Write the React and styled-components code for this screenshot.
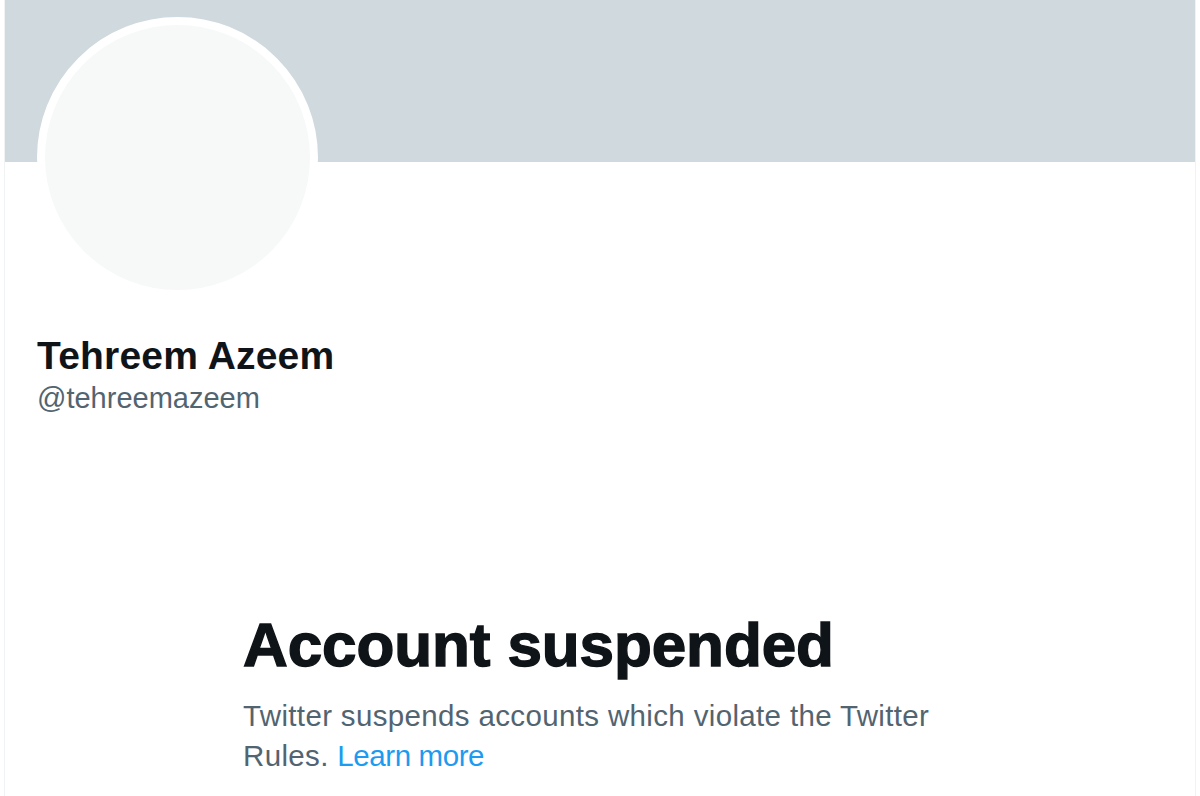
import styled, { createGlobalStyle } from "styled-components";

const GlobalStyle = createGlobalStyle`
    html, body {
        margin: 0;
        padding: 0;
        background-color: #ffffff;
        font-family: "Liberation Sans", Arial, sans-serif;
    }
`;

const Page = styled.div`
    padding-left: 4px;
    height: 796px;
    overflow: hidden;
`;

const Column = styled.main`
    box-sizing: border-box;
    width: 1192px;
    min-height: 796px;
    border-left: 1px solid #eff3f4;
    border-right: 1px solid #eff3f4;
    display: flex;
    flex-direction: column;
`;

const Banner = styled.div`
    height: 162px;
    background-color: #cfd9de;
`;

const ProfileHeader = styled.section`
    padding: 0 32px;
    display: flex;
    flex-direction: column;
    align-items: flex-start;
`;

const Avatar = styled.div`
    box-sizing: border-box;
    width: 281px;
    height: 281px;
    margin-top: -145px;
    border-radius: 50%;
    border: 8px solid #ffffff;
    background-color: #f7f9f9;
`;

const Name = styled.h1`
    margin: 34px 0 0 0;
    font-size: 39px;
    line-height: 48px;
    font-weight: 700;
    color: #0f1419;
    letter-spacing: 0.2px;
`;

const Handle = styled.div`
    font-size: 29px;
    line-height: 36px;
    color: #536471;
`;

const EmptyState = styled.section`
    margin-top: 193px;
    padding-left: 238px;
    max-width: 740px;
`;

const Title = styled.h2`
    margin: 0;
    font-size: 62px;
    line-height: 72px;
    font-weight: 700;
    color: #0f1419;
    letter-spacing: -0.1px;
    -webkit-text-stroke: 1.4px #0f1419;
`;

const Message = styled.p`
    margin: 15px 0 0 0;
    font-size: 29.5px;
    line-height: 40px;
    letter-spacing: 0.35px;
    color: #536471;
`;

const LearnMore = styled.a`
    color: #1d9bf0;
    text-decoration: none;
    letter-spacing: -0.4px;
`;

export default function App() {
    return (
        <Page>
            <GlobalStyle />
            <Column>
                <Banner />
                <ProfileHeader>
                    <Avatar />
                    <Name>Tehreem Azeem</Name>
                    <Handle>@tehreemazeem</Handle>
                </ProfileHeader>
                <EmptyState>
                    <Title>Account suspended</Title>
                    <Message>
                        Twitter suspends accounts which violate the Twitter Rules.{" "}
                        <LearnMore href="#">Learn more</LearnMore>
                    </Message>
                </EmptyState>
            </Column>
        </Page>
    );
}
